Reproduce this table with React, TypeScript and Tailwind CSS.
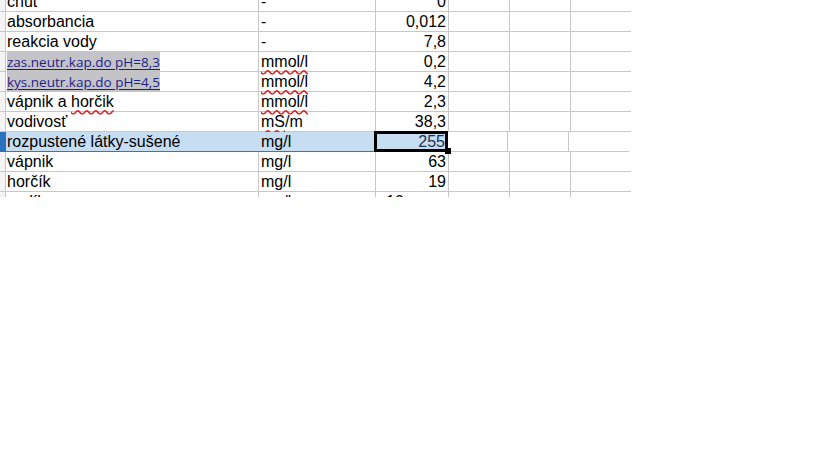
type Row = {
	a: string;
	b: string;
	c: string;
	link?: boolean;
	wavyB?: "all" | "mS";
	wavyA?: boolean;
	selected?: boolean;
	cLeft?: boolean;
};

const rows: Row[] = [
	{ a: "chuť", b: "-", c: "0" },
	{ a: "absorbancia", b: "-", c: "0,012" },
	{ a: "reakcia vody", b: "-", c: "7,8" },
	{ a: "zas.neutr.kap.do pH=8,3", b: "mmol/l", c: "0,2", link: true, wavyB: "all" },
	{ a: "kys.neutr.kap.do pH=4,5", b: "mmol/l", c: "4,2", link: true, wavyB: "all" },
	{ a: "vápnik a ", b: "mmol/l", c: "2,3", wavyA: true, wavyB: "all" },
	{ a: "vodivosť", b: "mS/m", c: "38,3", wavyB: "mS" },
	{ a: "rozpustené látky-sušené", b: "mg/l", c: "255", selected: true },
	{ a: "vápnik", b: "mg/l", c: "63" },
	{ a: "horčík", b: "mg/l", c: "19" },
	{ a: "sodík", b: "mg/l", c: "10", cLeft: true },
];

const wavy = "underline decoration-wavy decoration-[#e02020] underline-offset-[2px]";

const CellA = ({ row }: { row: Row }) => {
	if (row.link) {
		return (
			<span
				className="bg-[#c4c4c8] text-[#1e1e88] underline underline-offset-2 text-[13.5px] py-[1px]"
				style={{ fontFamily: '"Open Sans", "Noto Sans", sans-serif' }}
			>
				{row.a}
			</span>
		);
	}
	if (row.wavyA) {
		return (
			<span>
				{row.a}
				<span className={wavy}>horčik</span>
			</span>
		);
	}
	return <span>{row.a}</span>;
};

const CellB = ({ row }: { row: Row }) => {
	if (row.wavyB === "all") return <span className={wavy}>{row.b}</span>;
	if (row.wavyB === "mS")
		return (
			<span>
				<span className={wavy}>mS</span>/m
			</span>
		);
	return <span>{row.b}</span>;
};

const SheetRow = ({ row }: { row: Row }) => {
	const sel = row.selected;
	const line = sel ? "border-[#2f78c4] bg-[#c6ddf2]" : "border-[#c8c8c8]";
	return (
		<div className="flex h-[20px] w-[631px]">
			<div
				className={`w-[6px] shrink-0 border-b border-r ${
					sel ? "bg-[#2a72c0] border-[#2a72c0]" : "bg-[#f4f4f4] border-[#c8c8c8]"
				}`}
			/>
			<div
				className={`w-[253px] shrink-0 border-b ${line} ${
					sel ? "" : "border-r"
				} pl-[1px] leading-[19px] whitespace-nowrap`}
			>
				<CellA row={row} />
			</div>
			<div
				className={`shrink-0 border-b ${line} ${
					sel ? "w-[116px]" : "w-[117px] border-r"
				} pl-[2px] leading-[19px] whitespace-nowrap`}
			>
				<CellB row={row} />
			</div>
			{sel ? (
				<div className="relative w-[74px] shrink-0 -ml-[1px] -mt-[1px] h-[21px] -mr-[1px] border-[3px] border-black bg-[#c6ddf2] text-right leading-[15px] text-[#203252]">
					{row.c}
					<div className="absolute -right-[6px] -bottom-[5px] w-[6px] h-[6px] bg-black" />
				</div>
			) : (
				<div
					className={`w-[73px] shrink-0 border-b border-r border-[#c8c8c8] leading-[19px] whitespace-nowrap ${
						row.cLeft ? "text-left pl-[10px]" : "text-right pr-[2px]"
					}`}
				>
					{row.c}
				</div>
			)}
			<div className="w-[61px] shrink-0 border-b border-r border-[#c8c8c8]" />
			<div className="w-[61px] shrink-0 border-b border-r border-[#c8c8c8]" />
			<div className="w-[60px] shrink-0 border-b border-[#c8c8c8]" />
		</div>
	);
};

export default function App() {
	return (
		<div
			className="w-[819px] h-[460px] bg-white text-black text-[16px]"
			style={{ fontFamily: '"Liberation Sans", Arial, sans-serif' }}
		>
			<div className="h-[197px] overflow-hidden">
				<div className="-mt-[8px] flex flex-col">
					{rows.map((r, i) => (
						<SheetRow key={i} row={r} />
					))}
				</div>
			</div>
		</div>
	);
}
